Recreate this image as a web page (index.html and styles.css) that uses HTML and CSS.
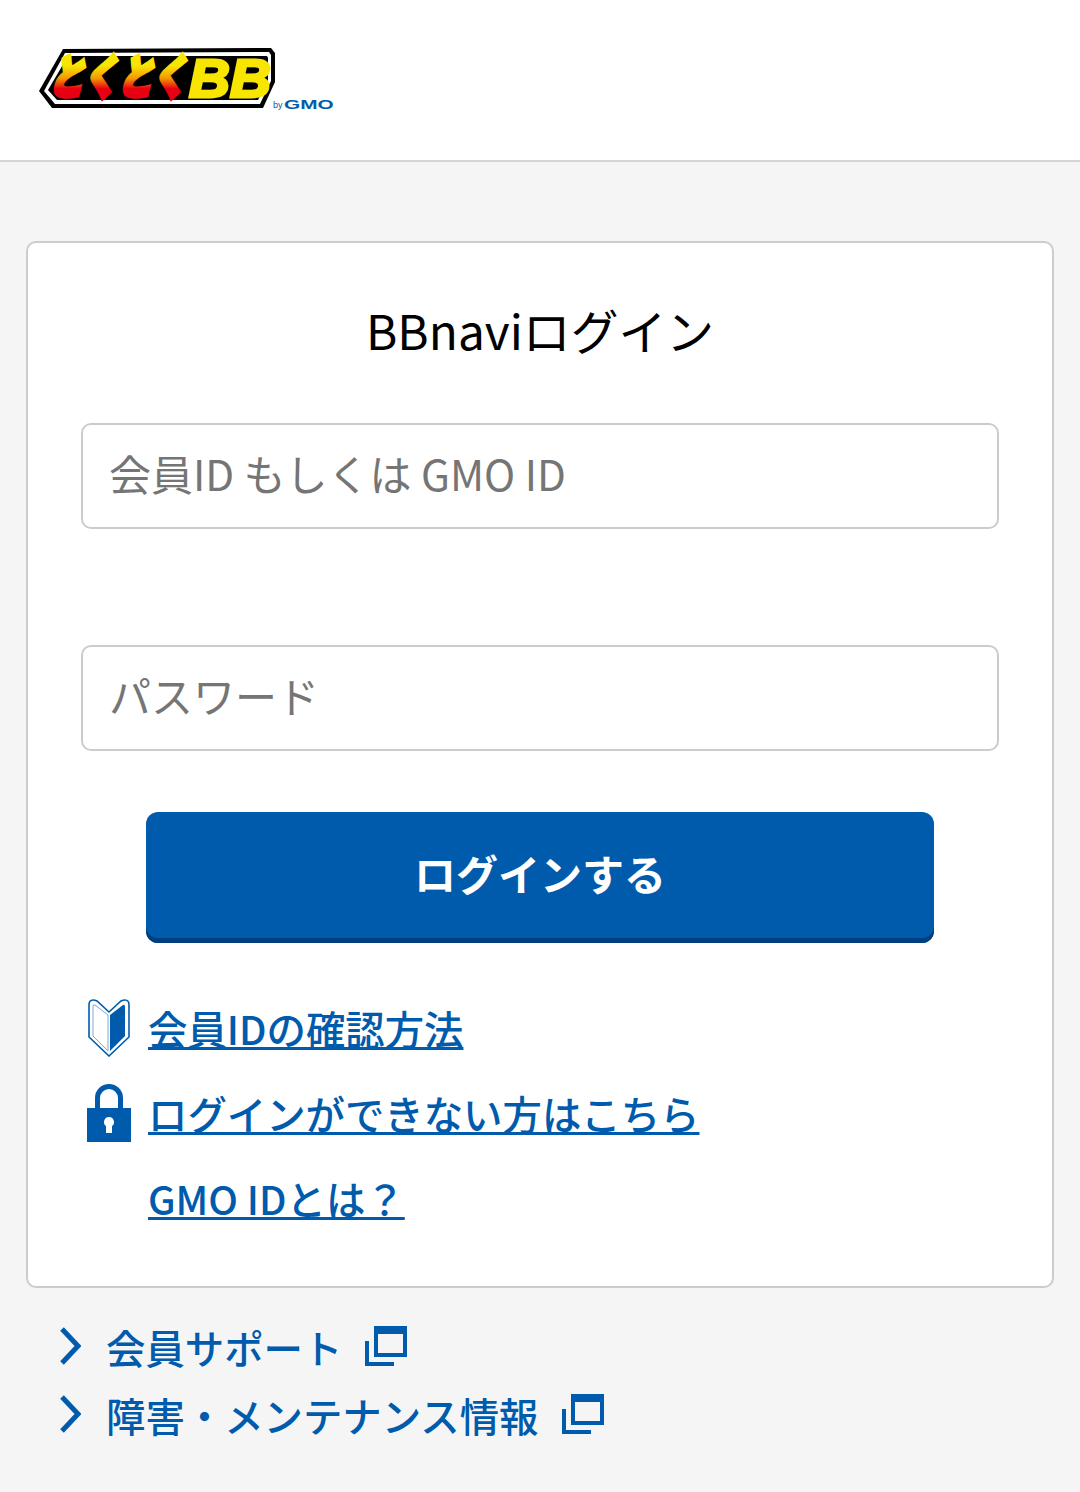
FILE: index.html
```html
<!DOCTYPE html>
<html lang="ja">
  <head>
    <meta charset="utf-8">
    <meta name="viewport" content="width=device-width, initial-scale=1">
    <title>BBnaviログイン</title>
    <link rel="stylesheet" href="styles.css">
  </head>
  <body>
    <header class="site-header">
      <a class="logo" href="#">
        <svg width="300" height="66" viewBox="0 0 300 66">
          <defs>
            <linearGradient id="logo-fire" gradientUnits="userSpaceOnUse" x1="0" y1="-34" x2="0" y2="4">
              <stop offset="0.1" stop-color="#f8e500"/>
              <stop offset="0.45" stop-color="#f59a00"/>
              <stop offset="0.75" stop-color="#e60012"/>
            </linearGradient>
          </defs>
          <polygon points="24,1 232,0 236,5 236,34 224,60 13,60 0,43" fill="#000"/>
          <polygon points="26,5 230,4 232,7 232,33 221,56 16,56 5,43" fill="#fff"/>
          <polygon points="29,8 228,8 229,10 229,32 219,52 18,52 9,42" fill="#000"/>
          <text class="logo-kana" transform="translate(9 46) skewX(-14) scale(0.7 0.94)">とくとく</text>
          <text class="logo-bb" transform="translate(150 49) scale(1.05 1)">BB</text>
          <text class="logo-by" x="234" y="60">by</text>
          <text class="logo-gmo" transform="translate(245 61) scale(1.6 1)">GMO</text>
        </svg>
      </a>
    </header>

    <main class="card">
      <h1>BBnaviログイン</h1>
      <form class="login-form">
        <input class="field" type="text" placeholder="会員ID もしくは GMO ID">
        <input class="field" type="password" placeholder="パスワード">
        <button class="submit" type="button">ログインする</button>
      </form>
      <ul class="help-links">
        <li>
          <svg class="help-icon" width="44" height="58" viewBox="0 0 44 58">
            <path d="M22 13 L10 2 Q8 1 6 1 Q2 1 2 6 V38 L22 57 L42 38 V6 Q42 1 38 1 Q36 1 34 2 Z" fill="#fff" stroke="#005bac" stroke-width="1.6"/>
            <path d="M21 16 L8 6 Q6 5 6 8 V37 L21 52 Z" fill="#fff" stroke="#7aa8d8" stroke-width="1"/>
            <path d="M23 16 L36 6 Q38 5 38 8 V37 L23 52 Z" fill="#005bac"/>
          </svg>
          <a href="#">会員IDの確認方法</a>
        </li>
        <li>
          <svg class="help-icon" width="44" height="58" viewBox="0 0 44 58">
            <path d="M10.5 26 V14 A11.5 11.5 0 0 1 33.5 14 V26" fill="none" stroke="#005bac" stroke-width="5"/>
            <path fill-rule="evenodd" d="M0 24 H44 V58 H0 Z M22 33 A5 5 0 0 0 19 42 V49 H25 V42 A5 5 0 0 0 22 33 Z" fill="#005bac"/>
          </svg>
          <a href="#">ログインができない方はこちら</a>
        </li>
        <li>
          <span class="help-icon"></span>
          <a href="#">GMO IDとは？</a>
        </li>
      </ul>
    </main>

    <ul class="sub-links">
      <li>
        <svg class="chevron" width="22" height="38" viewBox="0 0 22 38"><path d="M3 2 L19 19 L3 36" fill="none" stroke="#005bac" stroke-width="5"/></svg>
        <a href="#">会員サポート</a>
        <svg class="window" width="42" height="40" viewBox="0 0 42 40"><path d="M2 15 V38 H29" fill="none" stroke="#005bac" stroke-width="4"/><rect x="11" y="2" width="29" height="27" fill="none" stroke="#005bac" stroke-width="4"/><rect x="9" y="0" width="33" height="8" fill="#005bac"/></svg>
      </li>
      <li>
        <svg class="chevron" width="22" height="38" viewBox="0 0 22 38"><path d="M3 2 L19 19 L3 36" fill="none" stroke="#005bac" stroke-width="5"/></svg>
        <a href="#">障害・メンテナンス情報</a>
        <svg class="window" width="42" height="40" viewBox="0 0 42 40"><path d="M2 15 V38 H29" fill="none" stroke="#005bac" stroke-width="4"/><rect x="11" y="2" width="29" height="27" fill="none" stroke="#005bac" stroke-width="4"/><rect x="9" y="0" width="33" height="8" fill="#005bac"/></svg>
      </li>
    </ul>
  </body>
</html>
```

FILE: styles.css
```css
:root {
  font-family: "Noto Sans CJK JP", "Noto Sans", sans-serif;
  font-size: 39.4px;
  color: #000;
}

body {
  margin: 0;
  padding: 0;
  background: #f5f5f5;
}

ul {
  list-style: none;
  margin: 0;
  padding: 0;
}

a {
  color: #005bac;
  font-weight: 500;
}

.site-header {
  height: 160px;
  background: #fff;
  border-bottom: 2px solid #d5d5d5;
  display: flex;
  align-items: flex-start;
}
.logo {
  display: block;
  margin: 48px 0 0 39px;
  line-height: 0;
}
.logo-kana {
  font-family: "Noto Sans CJK JP", sans-serif;
  font-weight: 900;
  font-size: 50px;
  fill: url(#logo-fire);
  stroke: url(#logo-fire);
  stroke-width: 5px;
  stroke-linejoin: miter;
}
.logo-bb {
  font-family: "Liberation Sans", sans-serif;
  font-weight: 700;
  font-style: italic;
  font-size: 54px;
  fill: #f8e500;
  stroke: #f8e500;
  stroke-width: 3px;
}
.logo-by {
  font-family: "Liberation Sans", sans-serif;
  font-size: 9px;
  fill: #005bac;
}
.logo-gmo {
  font-family: "Liberation Sans", sans-serif;
  font-weight: 700;
  font-size: 13px;
  fill: #005bac;
}

.card {
  box-sizing: border-box;
  height: 1047px;
  margin: 79px 26px 0;
  padding: 0 53px;
  background: #fff;
  border: 2px solid #ccc;
  border-radius: 10px;
}
h1 {
  margin: 54px 0 0;
  font-size: 47.8px;
  font-weight: 400;
  line-height: 66px;
  text-align: center;
}

.login-form {
  display: flex;
  flex-direction: column;
  align-items: center;
  margin-top: 60px;
}
.field {
  box-sizing: border-box;
  width: 100%;
  height: 106px;
  padding: 0 26px 8px;
  margin-bottom: 116px;
  background: #fff;
  border: 2px solid #ccc;
  border-radius: 10px;
  font: inherit;
  font-size: 42px;
}
.field::placeholder {
  color: #757575;
  opacity: 1;
}
.field + .field {
  margin-bottom: 61px;
}
.submit {
  width: 788px;
  height: 131px;
  padding: 0 0 10px;
  background: #005bac;
  border: none;
  border-radius: 12px;
  box-shadow: inset 0 -5px 0 #003f7f;
  color: #fff;
  font: inherit;
  font-size: 42px;
  font-weight: 700;
}

.help-links {
  margin-top: 42px;
}
.help-links li {
  display: flex;
  align-items: center;
  gap: 17px;
  height: 85px;
  padding-left: 6px;
}
.help-icon {
  display: block;
  width: 44px;
  flex-shrink: 0;
}

.sub-links {
  margin: 24px 0 0 59px;
}
.sub-links li {
  display: flex;
  align-items: center;
  height: 68px;
}
.sub-links a {
  margin-left: 25px;
  text-decoration: none;
}
.window {
  margin-left: 23px;
}
```
